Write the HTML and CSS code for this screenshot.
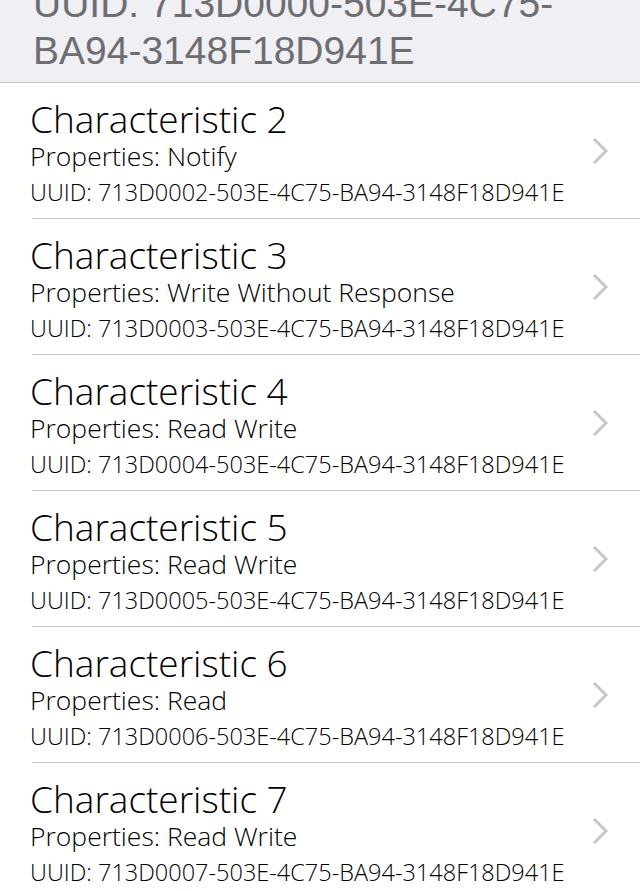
FILE: index.html
```html
<!DOCTYPE html>
<html>
<head>
<meta charset="utf-8">
<link rel="stylesheet" href="styles.css">
</head>
<body>
<div class="header">
  <div class="header-text">UUID: 713D0000-503E-4C75-<br>BA94-3148F18D941E</div>
</div>
<ul class="list">
  <li class="row"><div class="info"><div class="title">Characteristic 2</div><div class="props">Properties: Notify</div><div class="uuid">UUID: 713D0002-503E-4C75-BA94-3148F18D941E</div></div><svg class="chev" width="18" height="28" viewBox="0 0 18 28"><polyline points="3,2 15,14 3,26" fill="none" stroke="#c7c7cc" stroke-width="3"/></svg></li>
  <li class="row"><div class="info"><div class="title">Characteristic 3</div><div class="props">Properties: Write Without Response</div><div class="uuid">UUID: 713D0003-503E-4C75-BA94-3148F18D941E</div></div><svg class="chev" width="18" height="28" viewBox="0 0 18 28"><polyline points="3,2 15,14 3,26" fill="none" stroke="#c7c7cc" stroke-width="3"/></svg></li>
  <li class="row"><div class="info"><div class="title">Characteristic 4</div><div class="props">Properties: Read Write</div><div class="uuid">UUID: 713D0004-503E-4C75-BA94-3148F18D941E</div></div><svg class="chev" width="18" height="28" viewBox="0 0 18 28"><polyline points="3,2 15,14 3,26" fill="none" stroke="#c7c7cc" stroke-width="3"/></svg></li>
  <li class="row"><div class="info"><div class="title">Characteristic 5</div><div class="props">Properties: Read Write</div><div class="uuid">UUID: 713D0005-503E-4C75-BA94-3148F18D941E</div></div><svg class="chev" width="18" height="28" viewBox="0 0 18 28"><polyline points="3,2 15,14 3,26" fill="none" stroke="#c7c7cc" stroke-width="3"/></svg></li>
  <li class="row"><div class="info"><div class="title">Characteristic 6</div><div class="props">Properties: Read</div><div class="uuid">UUID: 713D0006-503E-4C75-BA94-3148F18D941E</div></div><svg class="chev" width="18" height="28" viewBox="0 0 18 28"><polyline points="3,2 15,14 3,26" fill="none" stroke="#c7c7cc" stroke-width="3"/></svg></li>
  <li class="row"><div class="info"><div class="title">Characteristic 7</div><div class="props">Properties: Read Write</div><div class="uuid">UUID: 713D0007-503E-4C75-BA94-3148F18D941E</div></div><svg class="chev" width="18" height="28" viewBox="0 0 18 28"><polyline points="3,2 15,14 3,26" fill="none" stroke="#c7c7cc" stroke-width="3"/></svg></li>
</ul>
</body>
</html>
```
FILE: styles.css
```css
html, body {
  margin: 0;
  padding: 0;
  background: #ffffff;
  overflow: hidden;
}
body {
  font-family: "Open Sans", "Liberation Sans", sans-serif;
}
.header {
  background: #efeff4;
  margin-top: -20px;
  padding: 0 0 8px 33px;
  border-bottom: 1px solid #c8c7cc;
}
.header-text {
  font-family: "Liberation Sans", Arial, sans-serif;
  font-size: 39px;
  line-height: 47px;
  color: #6d6d72;
}
.list {
  list-style: none;
  margin: 0;
  padding: 0 0 0 32px;
}
.row {
  display: flex;
  align-items: center;
  height: 135px;
  border-bottom: 1px solid #c8c7cc;
  padding-right: 31px;
}
.info {
  flex: 1;
  align-self: flex-start;
  padding-top: 16px;
  margin-left: -2px;
  color: #000;
  font-weight: 300;
  white-space: nowrap;
}
.title {
  font-size: 37px;
  line-height: 40px;
}
.props {
  font-size: 26.5px;
  line-height: 35px;
}
.uuid {
  font-size: 23.5px;
  line-height: 33px;
  margin-top: 2px;
}
.chev {
  flex: none;
  display: block;
}
```
